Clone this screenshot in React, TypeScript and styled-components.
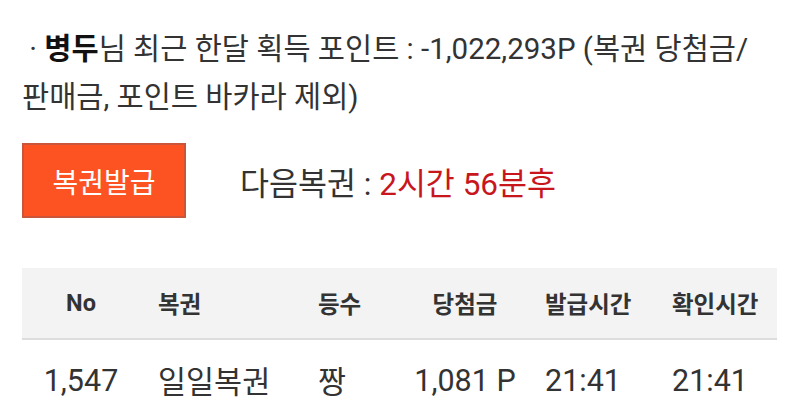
import { createGlobalStyle, styled } from "styled-components"

const GlobalStyle = createGlobalStyle`
  body {
    margin: 0;
    background: #ffffff;
    font-family: Roboto, "Noto Sans CJK KR", sans-serif;
    color: #333333;
  }
`

const rows = [
  { no: "1,547", name: "일일복권", rank: "짱", prize: "1,081 P", issued: "21:41", checked: "21:41" },
]

export default function App() {
  return (
    <>
      <GlobalStyle />
      <Page>
        <Summary>
          &nbsp;· <Name>병두</Name>님 최근 한달 획득 포인트 : -1,022,293P (복권 당첨금/
          <br />
          판매금, 포인트 바카라 제외)
        </Summary>
        <IssueBar>
          <IssueButton>복권발급</IssueButton>
          <NextTicket>
            다음복권 : <Remain>2시간 56분후</Remain>
          </NextTicket>
        </IssueBar>
        <Table>
          <HeadRow>
            <Cell $align="center">No</Cell>
            <Cell $pad={18}>복권</Cell>
            <Cell>등수</Cell>
            <Cell $align="center">당첨금</Cell>
            <Cell $pad={15}>발급시간</Cell>
            <Cell $pad={12}>확인시간</Cell>
          </HeadRow>
          {rows.map((r) => (
            <BodyRow key={r.no}>
              <Cell $align="center">{r.no}</Cell>
              <Cell $pad={18}>{r.name}</Cell>
              <Cell>{r.rank}</Cell>
              <Cell $align="center">{r.prize}</Cell>
              <Cell $pad={15}>{r.issued}</Cell>
              <Cell $pad={12}>{r.checked}</Cell>
            </BodyRow>
          ))}
        </Table>
      </Page>
    </>
  )
}

const Page = styled.div`
  padding: 25px 20px 0 22px;
`
const Summary = styled.p`
  margin: 0;
  font-size: 29.5px;
  line-height: 48px;
  color: #333333;
  white-space: nowrap;
`
const Name = styled.b`
  font-weight: 700;
  color: #111111;
`
const IssueBar = styled.div`
  display: flex;
  align-items: center;
  gap: 54px;
  margin-top: 22px;
`
const IssueButton = styled.button`
  width: 164px;
  height: 75px;
  padding: 0;
  border: 2px solid #c9553a;
  background: #fd5322;
  color: #ffffff;
  font-family: Roboto, "Noto Sans CJK KR", sans-serif;
  font-size: 28px;
`
const NextTicket = styled.div`
  font-size: 31.5px;
  color: #333333;
`
const Remain = styled.span`
  color: #c8161d;
`
const Table = styled.div`
  margin-top: 50px;
  width: 755px;
`
const Columns = styled.div`
  display: grid;
  grid-template-columns: 118px 178px 82px 130px 130px 117px;
  align-items: center;
`
const HeadRow = styled(Columns)`
  height: 70px;
  background: #f3f3f3;
  border-bottom: 2px solid #dddddd;
  font-size: 23.5px;
  font-weight: 700;
  color: #333333;
`
const BodyRow = styled(Columns)`
  height: 80px;
  font-size: 30.5px;
  color: #333333;
`
const Cell = styled.div<{ $align?: string; $pad?: number }>`
  text-align: ${(p) => p.$align ?? "left"};
  padding-left: ${(p) => p.$pad ?? 0}px;
  white-space: nowrap;
`
